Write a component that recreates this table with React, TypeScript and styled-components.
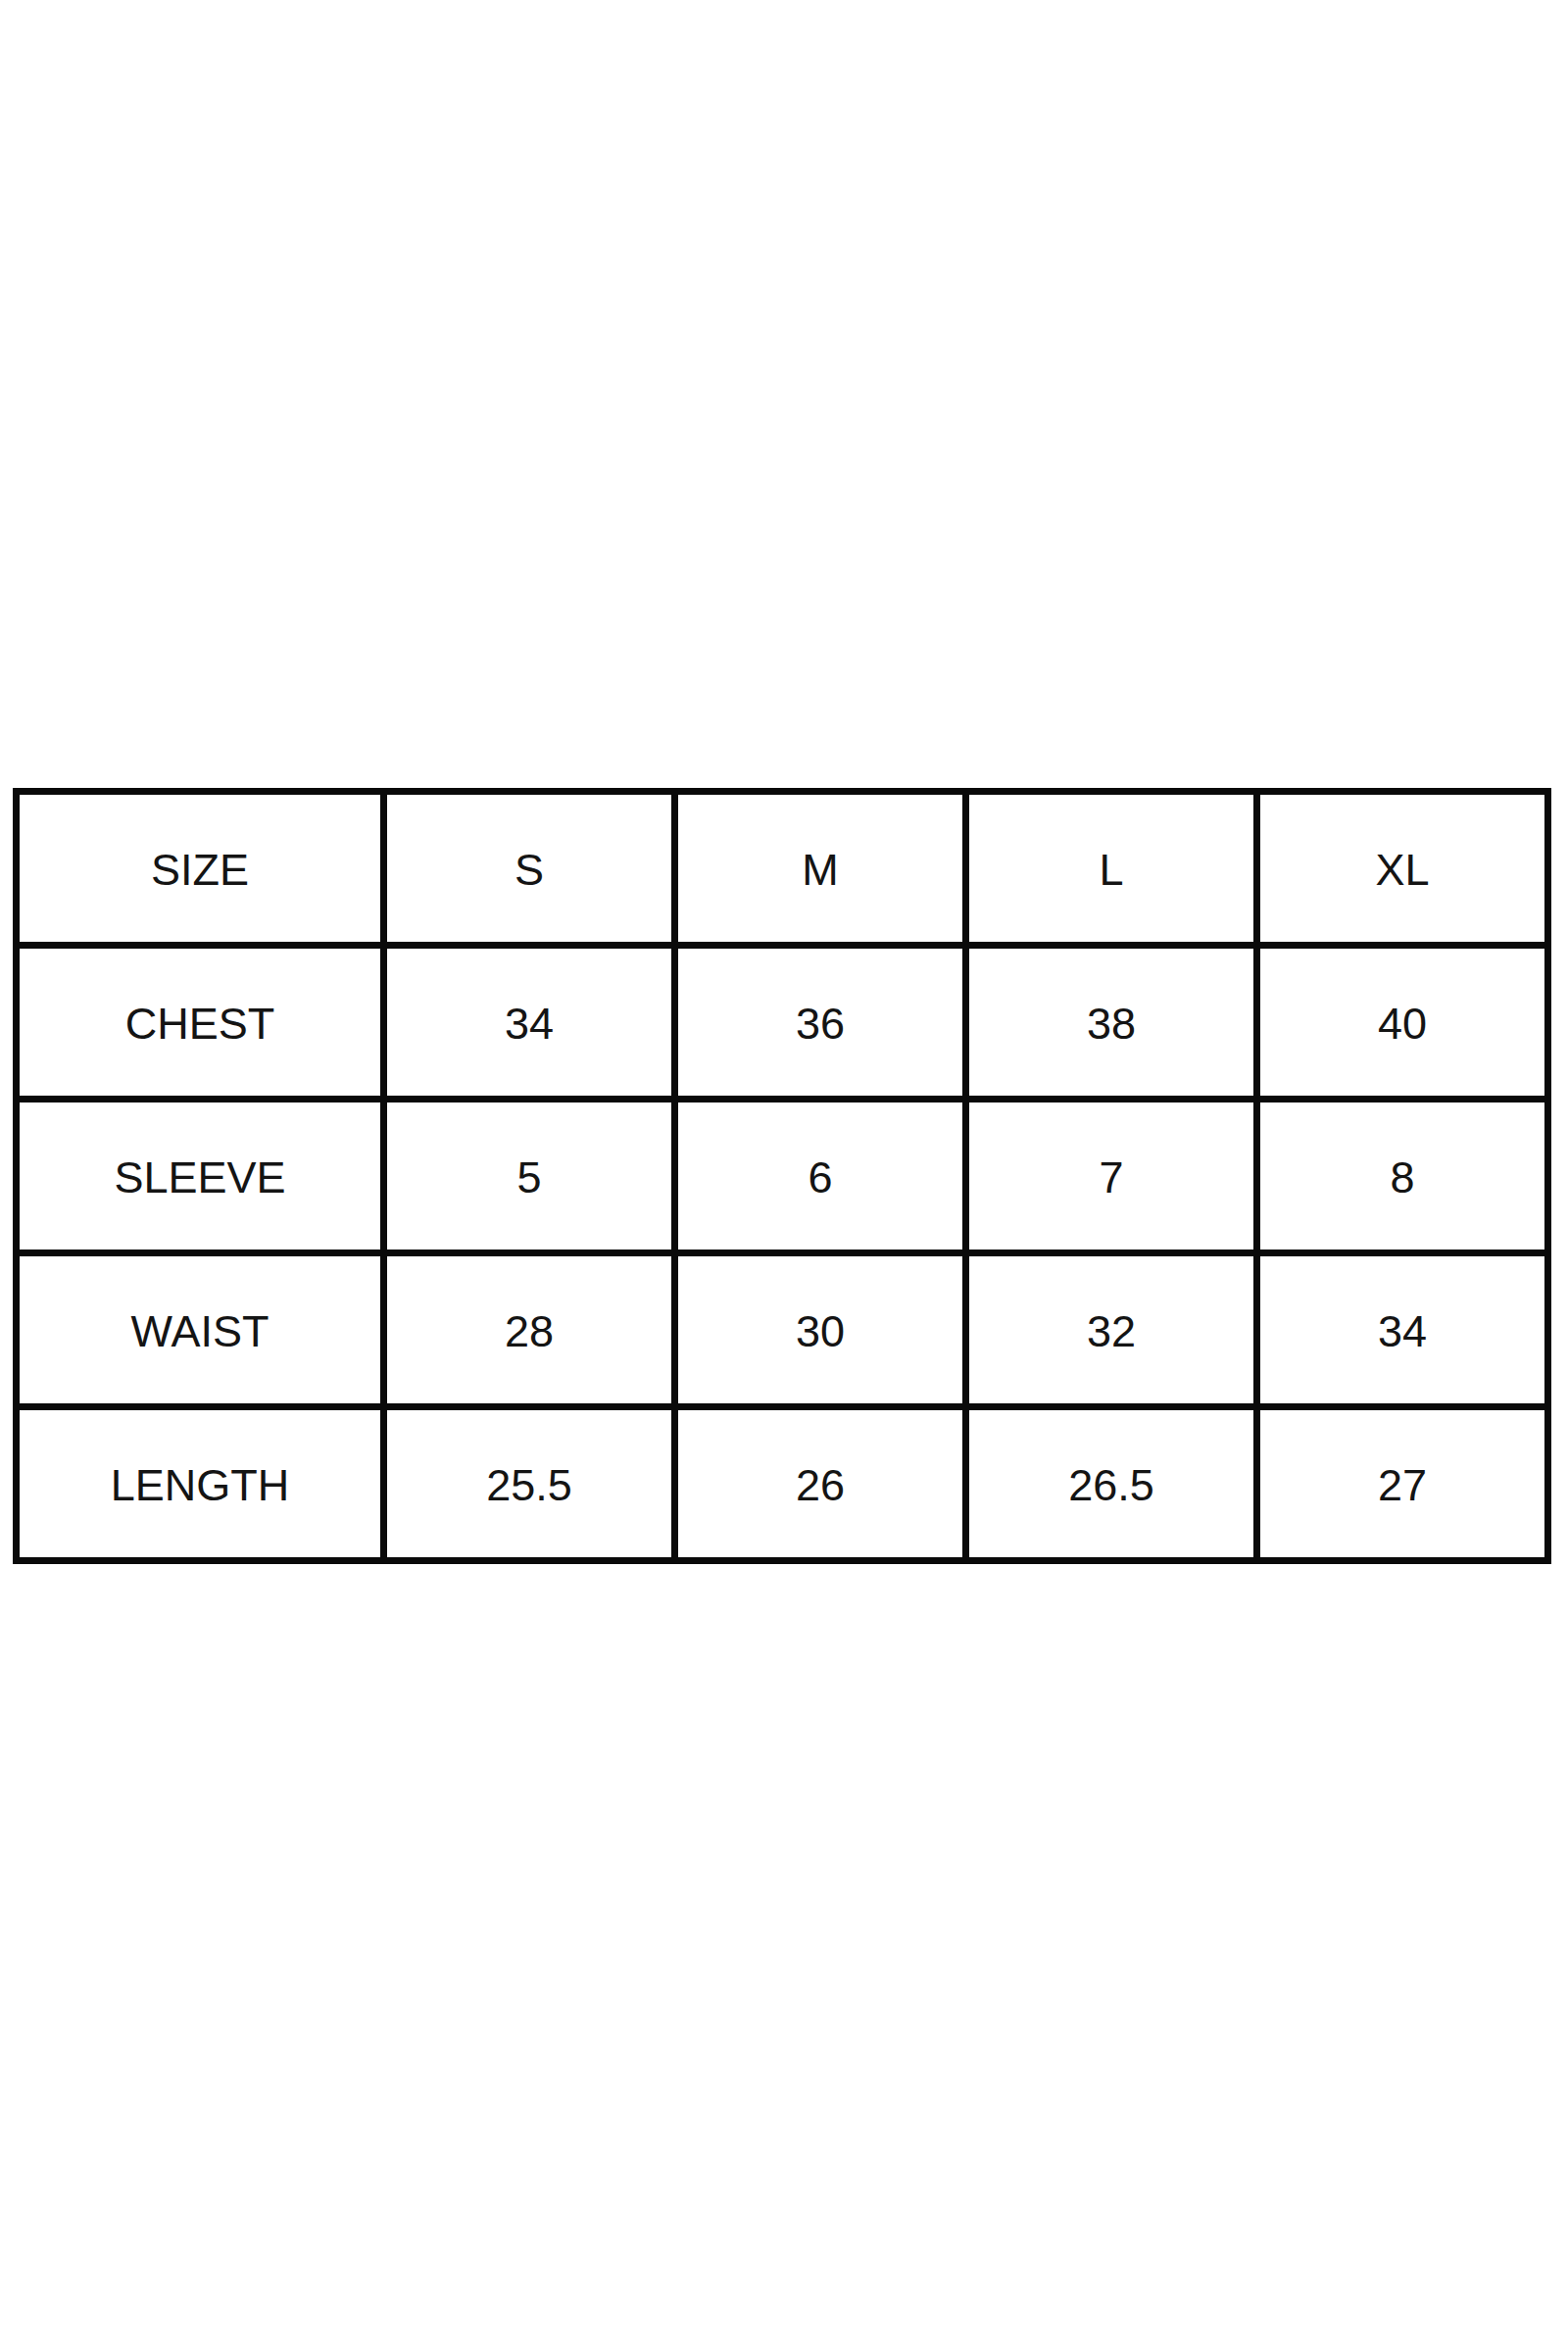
import styled, { createGlobalStyle } from "styled-components";

const GlobalStyle = createGlobalStyle`
    html, body {
        margin: 0;
        padding: 0;
        background: #ffffff;
    }
`;

const Page = styled.div`
    height: 2400px;
    display: flex;
    align-items: center;
    padding-left: 13px;
    box-sizing: border-box;
`;

const Chart = styled.div`
    width: 1570px;
    display: grid;
    grid-template-columns: 368px repeat(4, 1fr);
    grid-auto-rows: 150px;
    gap: 7px;
    padding: 7px;
    box-sizing: border-box;
    background: #0a0a0a;
`;

const Cell = styled.div`
    background: #ffffff;
    display: flex;
    align-items: center;
    justify-content: center;
    padding-top: 4px;
    box-sizing: border-box;
    font-family: "Liberation Sans", Arial, sans-serif;
    font-size: 45px;
    font-weight: 400;
    color: #141414;
`;

const rows: string[][] = [
    ["SIZE", "S", "M", "L", "XL"],
    ["CHEST", "34", "36", "38", "40"],
    ["SLEEVE", "5", "6", "7", "8"],
    ["WAIST", "28", "30", "32", "34"],
    ["LENGTH", "25.5", "26", "26.5", "27"],
];

export default function App() {
    return (
        <>
            <GlobalStyle />
            <Page>
                <Chart>
                    {rows.map((row, r) =>
                        row.map((value, c) => (
                            <Cell key={`${r}-${c}`}>{value}</Cell>
                        ))
                    )}
                </Chart>
            </Page>
        </>
    );
}
